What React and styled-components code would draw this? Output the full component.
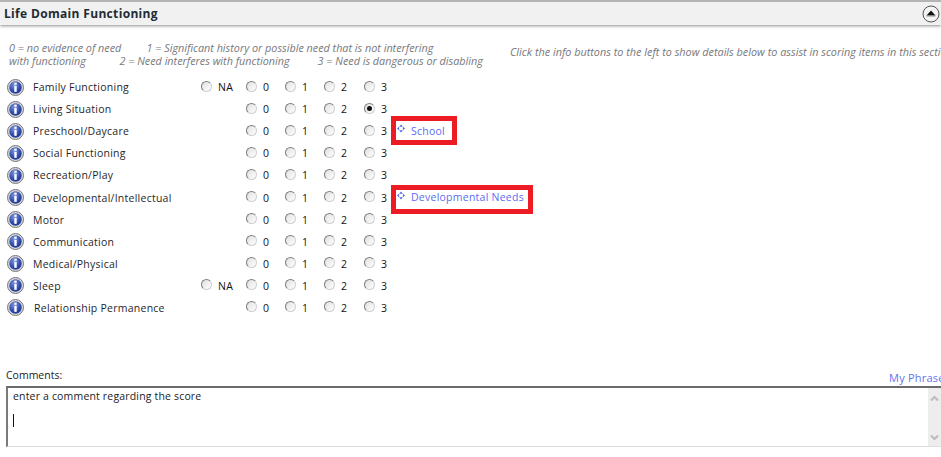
import React from "react";
import styled, { createGlobalStyle } from "styled-components";

const Global = createGlobalStyle`
  html, body { margin: 0; padding: 0; background: #fff; overflow: hidden; }
  body { font-family: "Open Sans", "Noto Sans", "Liberation Sans", sans-serif; width: 941px; height: 457px; }
`;
const Page = styled.div`width: 941px; height: 457px; overflow: hidden; display: flex; flex-direction: column;`;
const Header = styled.header`
  height: 23px; flex: none; border-top: 2px solid #b4b4b4; background: #f1f1f1;
  box-shadow: 0 1px 3px rgba(0,0,0,.45); display: flex; align-items: center; justify-content: space-between;
  padding: 0 1px 0 4px;
`;
const Title = styled.h1`margin: 0; font-size: 12px; font-weight: 700; color: #222b33; letter-spacing: .33px;`;
const Collapse = styled.svg`width: 18px; height: 18px; display: block;`;
const Legend = styled.div`display: flex; height: 26px; margin-top: 16px; padding-left: 9px; font-size: 10.8px; line-height: 13px; font-style: italic; color: #78787c; white-space: pre;`;
const LegendLeft = styled.div`width: 501px; flex: none;`;
const LegendRight = styled.div`padding-top: 4px; font-size: 10.85px;`;
const Rows = styled.div`display: flex; flex-direction: column; margin-top: 9px; height: 245px;`;
const Row = styled.div`height: 22.1px; display: grid; grid-template-columns: 33px 168px 45px 39px 39px 40px 27px auto; align-items: center; font-size: 10.5px; color: #1f1f2a; letter-spacing: .25px;`;
const InfoWrap = styled.div`padding-left: 7px; display: flex;`;
const Label = styled.div`white-space: nowrap; transform: translateX(${p => p.$shift || 0}px);`;
const Opt = styled.label`display: flex; align-items: center; gap: 6px; color: #111;`;
const Radio = styled.span`
  width: 11px; height: 11px; flex: none; box-sizing: border-box; border-radius: 50%; background: linear-gradient(135deg,#e0e0e0,#fff);
  border: 1px solid #7d7d7d; border-right-color: #cfcfcf; border-bottom-color: #cfcfcf; display: flex; align-items: center; justify-content: center; transform: translateY(-1px);
  &::after { content: ""; width: 5px; height: 5px; border-radius: 50%; background: ${p => p.$on ? "#111" : "transparent"}; }
`;
const LinkBox = styled.a`
  margin: ${p => p.$top}px 0 0 5px; padding: 0 ${p => p.$right}px ${p => p.$bottom}px 1px; box-sizing: border-box; height: 19px;
  display: inline-flex; align-items: center; gap: 6px; color: #5a6cf0; white-space: nowrap;
  outline: 5px solid #ed1c24; justify-self: start; align-self: start;
`;
const Move = styled.svg`width: 8px; height: 9px; transform: translateY(-2px);`;
const CommentsBar = styled.div`display: flex; justify-content: space-between; align-items: flex-end; padding-left: 6px; font-size: 10.5px; color: #222; height: 14px; margin: 47px 0 4px; white-space: nowrap;`;
const Phrases = styled.a`color: #6472f0; font-size: 11px; margin: 0 -9px -3px 0; letter-spacing: .2px;`;
const Box = styled.div`margin-left: 6px; height: 58px; flex: none; border-top: 2px solid #6a6a6a; border-left: 2px solid #7a7a7a; border-bottom: 1px solid #dcdcdc; display: flex; justify-content: space-between;`;
const Text = styled.div`padding: 1px 0 0 5px; font-size: 10.5px; color: #1b1b1b; line-height: 14px; letter-spacing: .17px;`;
const Caret = styled.div`width: 1px; height: 13px; background: #111; margin-top: 11px;`;
const Scroll = styled.div`width: 13px; background: #ededed; display: flex; flex-direction: column; justify-content: space-between; align-items: center; padding: 7px 0 5px; box-sizing: border-box;`;
const Chevron = styled.svg`width: 9px; height: 7px;`;

const Info = () => (
  <svg width="17" height="17" viewBox="0 0 17 17">
    <defs>
      <radialGradient id="b" cx=".4" cy=".3" r=".8"><stop offset="0" stopColor="#7d95dd" /><stop offset=".6" stopColor="#2f4bad" /><stop offset="1" stopColor="#1d3190" /></radialGradient>
    </defs>
    <circle cx="8.5" cy="8.5" r="8" fill="#d8d8dc" stroke="#777" />
    <circle cx="8.5" cy="8.5" r="6.2" fill="url(#b)" />
    <rect x="7.3" y="3.6" width="2.4" height="2.2" fill="#fff" />
    <rect x="7.3" y="6.8" width="2.4" height="6" fill="#fff" />
  </svg>
);

const MoveIcon = () => (
  <Move viewBox="0 0 9 9"><path d="M4.5 0 6.5 2.4H2.5zM4.5 9 2.5 6.6h4zM0 4.5 2.4 2.5v4zM9 4.5 6.6 6.5v-4z" fill="#4f63e6" /></Move>
);

const Choice = ({ v, on }) => <Opt><Radio $on={on} />{v}</Opt>;

const data = [
  { label: "Family Functioning", na: true },
  { label: "Living Situation", on: 3 },
  { label: "Preschool/Daycare", link: "School", top: 1, bottom: 0, right: 7 },
  { label: "Social Functioning" },
  { label: "Recreation/Play" },
  { label: "Developmental/Intellectual", link: "Developmental Needs", top: 4, bottom: 5, right: 4 },
  { label: "Motor" },
  { label: "Communication" },
  { label: "Medical/Physical" },
  { label: "Sleep", na: true },
  { label: "Relationship Permanence", shift: 1 },
];

export default function App() {
  return (
    <Page>
      <Global />
      <Header>
        <Title>Life Domain Functioning</Title>
        <Collapse viewBox="0 0 18 18">
          <circle cx="9" cy="9" r="8" fill="#f4f4f4" stroke="#555" />
          <path d="M9 5.5 13.5 10.5H4.5z" fill="#111" />
          <rect x="4.5" y="10.5" width="9" height="1" fill="#888" />
        </Collapse>
      </Header>
      <Legend>
        <LegendLeft>{"0 = no evidence of need         1 = Significant history or possible need that is not interfering\nwith functioning            2 = Need interferes with functioning          3 = Need is dangerous or disabling"}</LegendLeft>
        <LegendRight>Click the info buttons to the left to show details below to assist in scoring items in this section</LegendRight>
      </Legend>
      <Rows>
        {data.map(r => (
          <Row key={r.label}>
            <InfoWrap><Info /></InfoWrap>
            <Label $shift={r.shift}>{r.label}</Label>
            {r.na ? <Choice v="NA" /> : <span />}
            {[0, 1, 2, 3].map(v => <Choice key={v} v={v} on={r.on === v} />)}
            {r.link ? <LinkBox $top={r.top} $bottom={r.bottom} $right={r.right}><MoveIcon />{r.link}</LinkBox> : <span />}
          </Row>
        ))}
      </Rows>
      <CommentsBar>Comments:<Phrases>My Phrases</Phrases></CommentsBar>
      <Box>
        <Text>enter a comment regarding the score<Caret /></Text>
        <Scroll>
          <Chevron viewBox="0 0 9 7"><path d="M1 5.5 4.5 2 8 5.5" fill="none" stroke="#bbb" strokeWidth="2" /></Chevron>
          <Chevron viewBox="0 0 9 7"><path d="M1 1.5 4.5 5 8 1.5" fill="none" stroke="#bbb" strokeWidth="2" /></Chevron>
        </Scroll>
      </Box>
    </Page>
  );
}
